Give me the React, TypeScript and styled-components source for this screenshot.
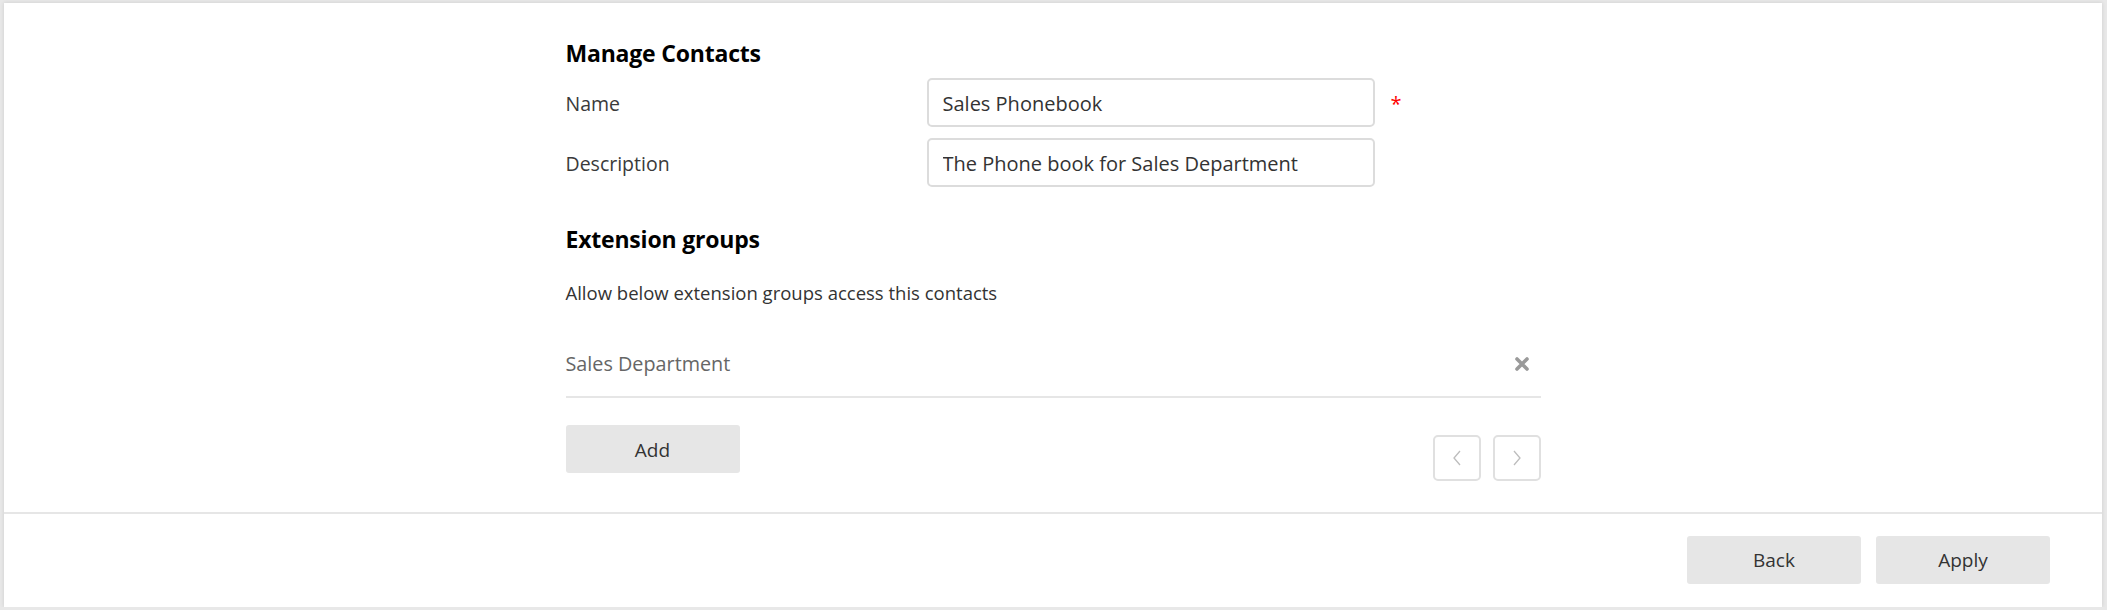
import React from "react";
import styled, { createGlobalStyle } from "styled-components";

const GlobalStyle = createGlobalStyle`
  html, body {
    margin: 0;
    padding: 0;
    background: #e8e8e8;
  }
  body {
    font-family: "Open Sans", "Noto Sans", sans-serif;
    color: #333;
  }
  * { box-sizing: border-box; }
`;

const Panel = styled.div`
  margin: 3px 5px 0 4px;
  height: 604px;
  background: #fff;
  box-shadow: 0 0 4px rgba(0, 0, 0, 0.12);
  display: flex;
  flex-direction: column;
`;

const Body = styled.div`
  flex: 1;
  display: flex;
  justify-content: center;
`;

const Content = styled.div`
  width: 975px;
  display: flex;
  flex-direction: column;
`;

const Heading = styled.h2<{ $top: number }>`
  margin: ${(p) => p.$top}px 0 0 0;
  font-size: 23px;
  line-height: 28px;
  font-weight: 700;
  letter-spacing: -0.2px;
  color: #000;
`;

const FormRow = styled.div`
  display: grid;
  grid-template-columns: 361px 448px auto;
  align-items: center;
  margin-top: 11px;
  height: 49px;
`;

const Label = styled.label`
  font-size: 19.5px;
  color: #3a3a3a;
  padding-top: 2px;
`;

const Input = styled.input`
  height: 49px;
  width: 448px;
  border: 2px solid #dcdcdc;
  border-radius: 5px;
  padding: 2px 14px 0 14px;
  font-family: inherit;
  font-size: 20px;
  color: #333;
  outline: none;
`;

const Required = styled.span`
  color: #ff0000;
  font-size: 20px;
  margin-left: 16px;
  line-height: 1;
  padding-top: 2px;
`;

const Hint = styled.p`
  margin: 28px 0 0 0;
  font-size: 18.5px;
  line-height: 24px;
  color: #333;
`;

const ListItem = styled.div`
  margin-top: 26px;
  height: 67px;
  border-bottom: 2px solid #e6e6e6;
  display: flex;
  align-items: center;
  justify-content: space-between;
  padding: 0 12px 0 0;
`;

const ItemName = styled.span`
  font-size: 19.8px;
  color: #666;
`;

const RemoveButton = styled.button`
  border: none;
  background: transparent;
  padding: 0;
  width: 14px;
  height: 14px;
  display: flex;
  cursor: pointer;
`;

const ActionRow = styled.div`
  display: flex;
  justify-content: space-between;
  align-items: flex-start;
  margin-top: 27px;
`;

const GreyButton = styled.button`
  width: 174px;
  height: 48px;
  border: none;
  border-radius: 3px;
  background: #e6e6e6;
  font-family: inherit;
  font-size: 19px;
  color: #333;
  padding-top: 2px;
  cursor: pointer;
`;

const Pager = styled.div`
  display: flex;
  gap: 12px;
  margin-top: 10px;
`;

const PageButton = styled.button`
  width: 48px;
  height: 46px;
  border: 2px solid #e0e0e0;
  border-radius: 5px;
  background: #fff;
  display: flex;
  align-items: center;
  justify-content: center;
  padding: 0;
  cursor: pointer;
`;

const Footer = styled.div`
  height: 95px;
  border-top: 2px solid #e6e6e6;
  display: flex;
  justify-content: flex-end;
  align-items: center;
  gap: 15px;
  padding: 0 52px 2px 0;
`;

const Chevron = ({ dir }: { dir: "left" | "right" }) => (
  <svg width="10" height="16" viewBox="0 0 10 16">
    <path
      d={dir === "left" ? "M8 1 L2 8 L8 15" : "M2 1 L8 8 L2 15"}
      fill="none"
      stroke="#bdbdbd"
      strokeWidth="1.3"
    />
  </svg>
);

const CrossIcon = () => (
  <svg width="14" height="14" viewBox="0 0 14 14">
    <path d="M2 2 L12 12 M12 2 L2 12" stroke="#9a9a9a" strokeWidth="3.6" strokeLinecap="round" />
  </svg>
);

export default function App() {
  return (
    <>
      <GlobalStyle />
      <Panel>
        <Body>
          <Content>
            <Heading $top={36}>Manage Contacts</Heading>
            <FormRow>
              <Label>Name</Label>
              <Input defaultValue="Sales Phonebook" />
              <Required>*</Required>
            </FormRow>
            <FormRow>
              <Label>Description</Label>
              <Input defaultValue="The Phone book for Sales Department" />
            </FormRow>
            <Heading $top={38}>Extension groups</Heading>
            <Hint>Allow below extension groups access this contacts</Hint>
            <ListItem>
              <ItemName>Sales Department</ItemName>
              <RemoveButton aria-label="Remove">
                <CrossIcon />
              </RemoveButton>
            </ListItem>
            <ActionRow>
              <GreyButton>Add</GreyButton>
              <Pager>
                <PageButton aria-label="Previous">
                  <Chevron dir="left" />
                </PageButton>
                <PageButton aria-label="Next">
                  <Chevron dir="right" />
                </PageButton>
              </Pager>
            </ActionRow>
          </Content>
        </Body>
        <Footer>
          <GreyButton>Back</GreyButton>
          <GreyButton>Apply</GreyButton>
        </Footer>
      </Panel>
    </>
  );
}
